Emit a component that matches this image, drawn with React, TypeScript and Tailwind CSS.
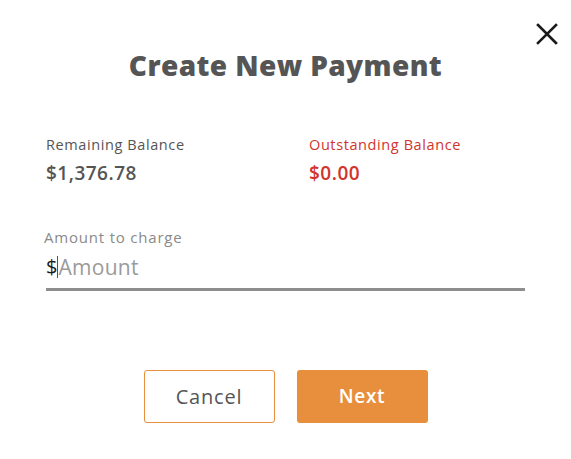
import React from 'react';

const App = () => {
  return (
    <div className="relative w-[571px] h-[459px] bg-white font-['Open_Sans',sans-serif] text-[#555]">
      {/* Close button */}
      <button className="absolute right-[11px] top-[21px] w-[26px] h-[26px] flex items-center justify-center text-[#1a1a1a]">
        <svg width="22" height="22" viewBox="0 0 22 22" fill="none" stroke="currentColor" strokeWidth="2.6" strokeLinecap="square">
          <path d="M2 2 L20 20 M20 2 L2 20" />
        </svg>
      </button>

      <div className="px-[46px] pt-[47px]">
        {/* Title */}
        <h2 className="text-center text-[28px] leading-[36px] font-extrabold tracking-[0.4px] text-[#555]">Create New Payment</h2>

        {/* Balances */}
        <div className="grid grid-cols-[263px_1fr] mt-[52px]">
          <div>
            <p className="text-[14.5px] leading-[20px] tracking-[0.6px] text-[#555]">Remaining Balance</p>
            <p className="mt-[5px] text-[19px] leading-[26px] font-semibold tracking-[0.5px] text-[#555]">$1,376.78</p>
          </div>
          <div>
            <p className="text-[14.5px] leading-[20px] tracking-[0.6px] text-[#d0342c]">Outstanding Balance</p>
            <p className="mt-[5px] text-[19px] leading-[26px] font-semibold tracking-[0.5px] text-[#d0342c]">$0.00</p>
          </div>
        </div>

        {/* Amount input */}
        <div className="mt-[41px]">
          <label className="block -ml-[2px] text-[15px] leading-[20px] tracking-[0.8px] text-[#8a8a8a]">Amount to charge</label>
          <div className="flex items-center mt-[6px] pb-[7px] border-b-[3px] border-[#8e8e8e]">
            <span className="text-[20px] leading-[28px] text-[#1a1a1a]">$</span>
            <span className="w-px h-[22px] bg-[#555]" />
            <input
              className="flex-1 outline-none text-[21px] leading-[28px] tracking-[0.3px] text-[#1a1a1a] placeholder:text-[#9a9a9a]"
              placeholder="Amount"
            />
          </div>
        </div>

        {/* Actions */}
        <div className="flex justify-center gap-[22px] mt-[79px]">
          <button className="w-[131px] h-[53px] rounded-[3px] border border-[#e88f3e] bg-white text-[20px] tracking-[0.8px] text-[#555]">
            Cancel
          </button>
          <button className="w-[131px] h-[53px] rounded-[3px] bg-[#e88f3e] text-[19px] font-semibold tracking-[0.7px] text-white">
            Next
          </button>
        </div>
      </div>
    </div>
  );
};

export default App;
